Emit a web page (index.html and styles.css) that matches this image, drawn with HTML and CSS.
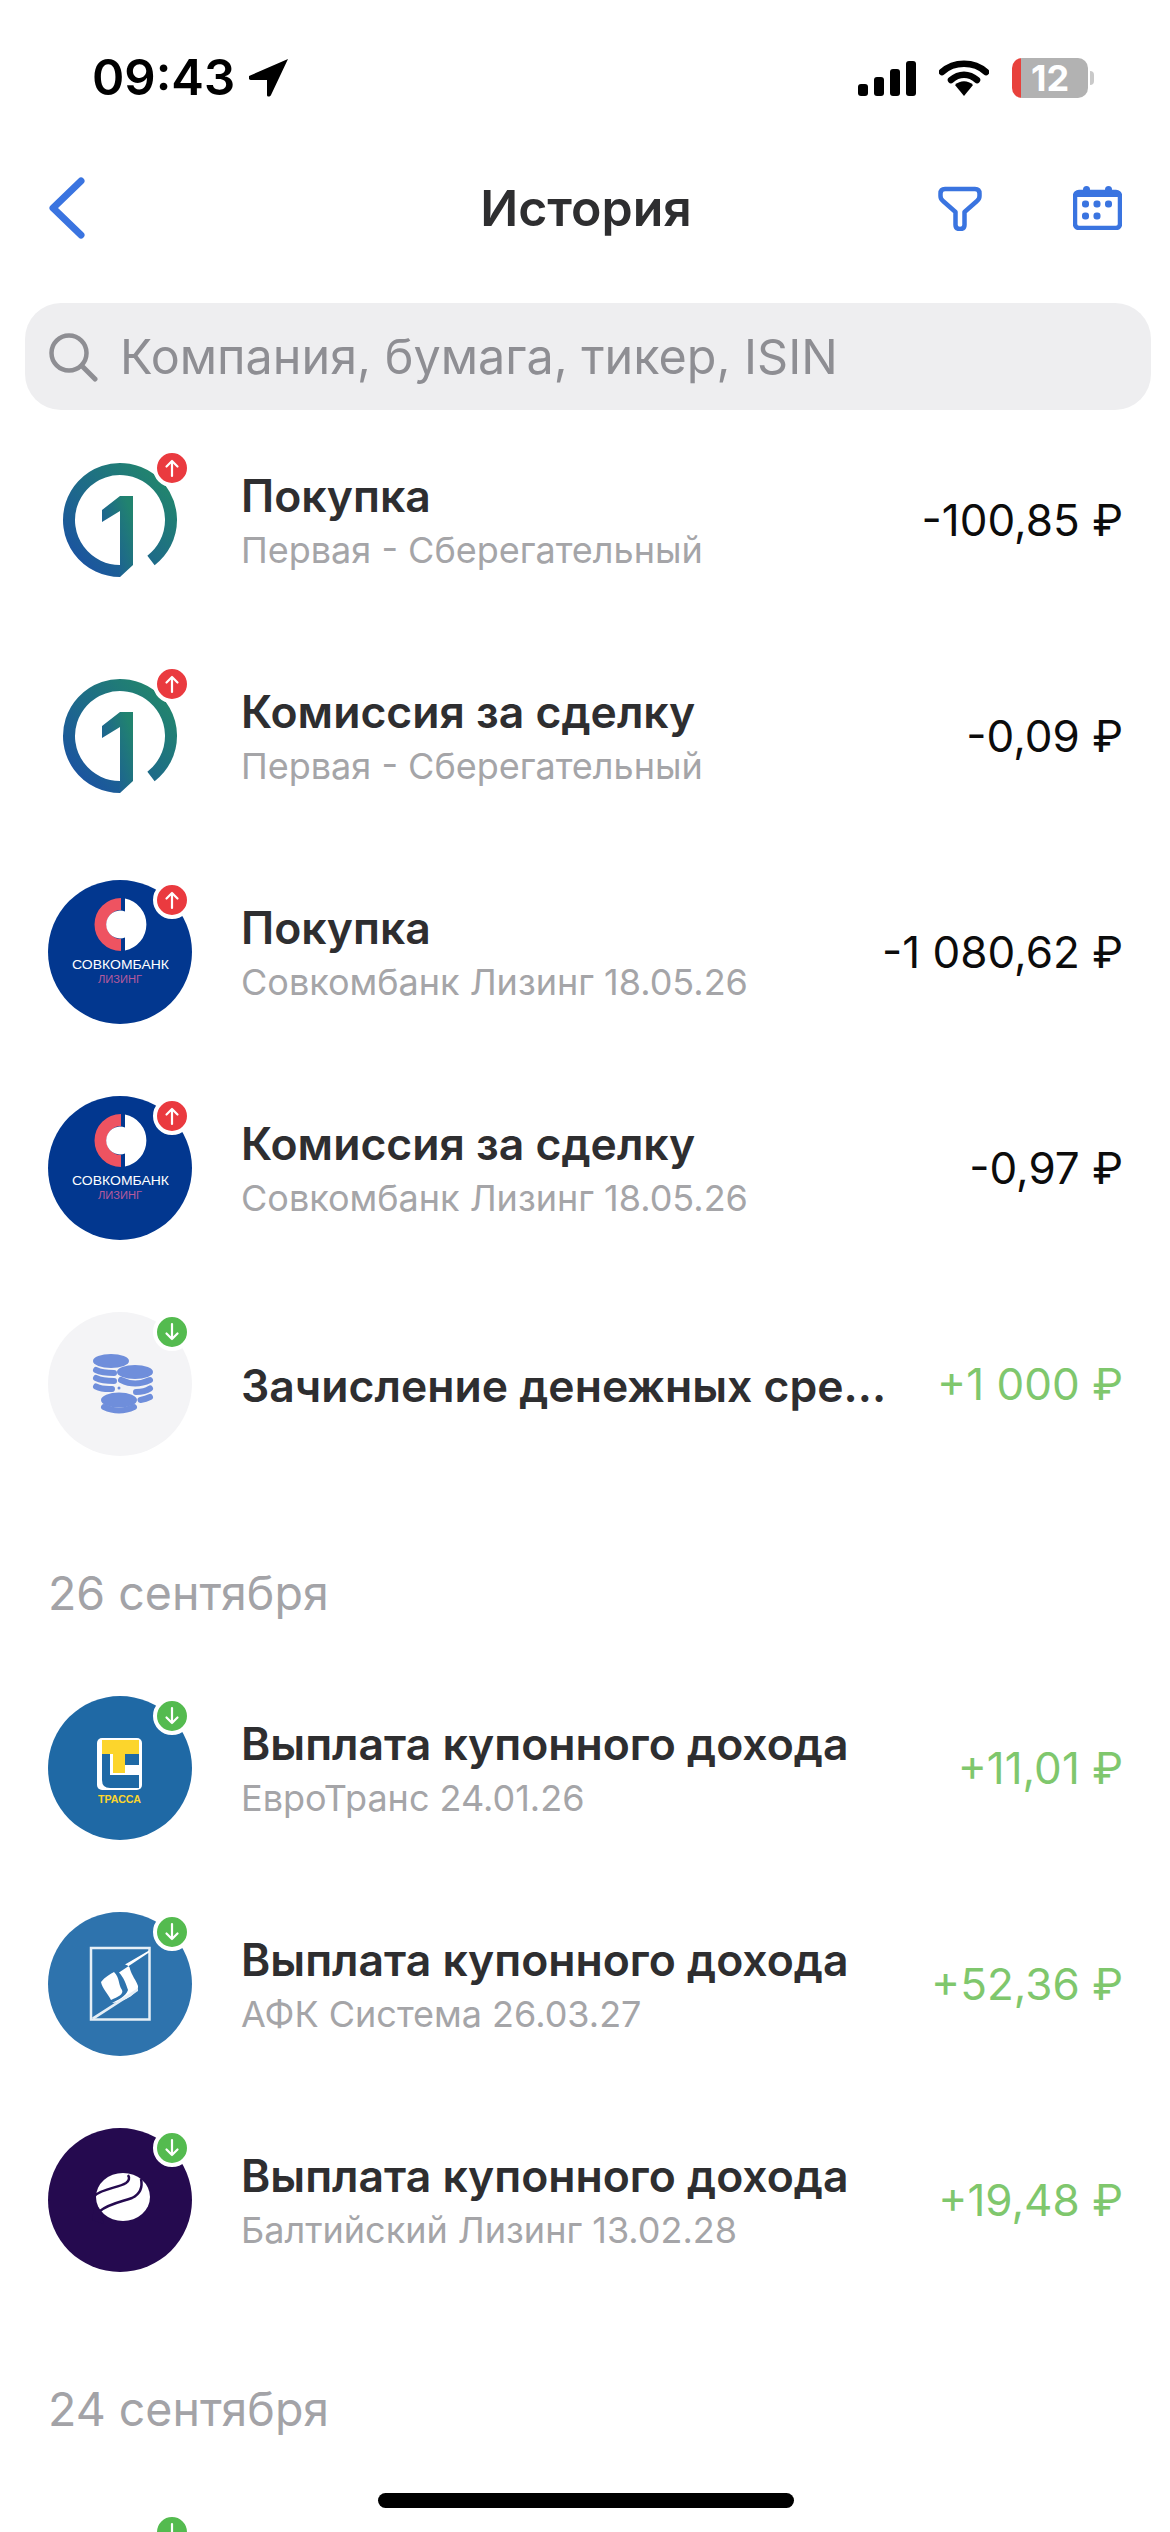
FILE: index.html
```html
<!DOCTYPE html>
<html lang="ru">
<head>
  <meta charset="UTF-8">
  <meta name="viewport" content="width=device-width, initial-scale=1.0">
  <title>История</title>
  <link rel="stylesheet" href="styles.css">
</head>
<body>

<svg class="defs" width="0" height="0" aria-hidden="true">
  <defs>
    <linearGradient id="firstGrad" x1="0.1" y1="0.9" x2="0.9" y2="0.15">
      <stop offset="0" stop-color="#1b559f"/>
      <stop offset="1" stop-color="#21836f"/>
    </linearGradient>

    <symbol id="logo-first" viewBox="0 0 144 144">
      <path d="M72 123 A51 51 0 1 1 103 112.5" fill="none" stroke="url(#firstGrad)" stroke-width="12"/>
      <path d="M85 48 V117 L72 129 V63 L54 74 V62 L72 48 Z" fill="url(#firstGrad)"/>
    </symbol>

    <symbol id="logo-sovcom" viewBox="0 0 144 144">
      <circle cx="72" cy="72" r="72" fill="#02378f"/>
      <path d="M73 18 V30 A14.500 14.500 0 0 0 73 59 V71 A26.500 26.500 0 0 1 73 18 Z" fill="#ee5361"/>
      <path d="M77 18.500 A26.500 26.500 0 0 1 77 70.500 V57.500 A13.900 13.900 0 1 1 77 31.500 Z" fill="#fff"/>
      <text x="72.500" y="88.500" text-anchor="middle" textLength="97" lengthAdjust="spacingAndGlyphs" class="logo-text" fill="#fff">СОВКОМБАНК</text>
      <text x="72" y="103" text-anchor="middle" textLength="44" lengthAdjust="spacingAndGlyphs" class="logo-sub" fill="#b85a9c">ЛИЗИНГ</text>
    </symbol>

    <symbol id="logo-coins" viewBox="0 0 144 144">
      <circle cx="72" cy="72" r="72" fill="#f4f4f6"/>
      <g fill="#6f8edb">
        <ellipse cx="63" cy="49" rx="18" ry="7"/>
        <ellipse cx="87" cy="60" rx="18" ry="7"/>
        <ellipse cx="71" cy="88" rx="18" ry="7.500"/>
        <circle cx="71" cy="76" r="1.500"/>
      </g>
      <g fill="none" stroke="#6f8edb" stroke-width="6" stroke-linecap="round">
        <path d="M48 58 Q54 61 66 61"/>
        <path d="M48 66 Q54 69 66 69"/>
        <path d="M48 74.500 Q54 77.500 64 77"/>
        <path d="M73 68 Q87 75 102 68"/>
        <path d="M88 80 Q97 80 102 76.500"/>
        <path d="M92.500 88 Q98 87 102 85"/>
        <path d="M56 95 Q71 102 86 95"/>
      </g>
    </symbol>

    <symbol id="logo-trassa" viewBox="0 0 144 144">
      <circle cx="72" cy="72" r="72" fill="#1f69a5"/>
      <rect x="49" y="42" width="45" height="52" rx="5" fill="#fff"/>
      <path d="M54 58 H62 V79 H91 V92 H62 Q54 92 54 84 Z" fill="#1f69a5"/>
      <rect x="77" y="58" width="14" height="11" fill="#1f69a5"/>
      <path d="M54 44 H91 V58 H77 V77 H65 V58 H54 Z" fill="#fcd52c"/>
      <text x="71.500" y="107" text-anchor="middle" textLength="43" lengthAdjust="spacingAndGlyphs" class="logo-trassa-text" fill="#fcd52c">ТРАССА</text>
    </symbol>

    <symbol id="logo-sistema" viewBox="0 0 144 144">
      <circle cx="72" cy="72" r="72" fill="#2e73ad"/>
      <rect x="43" y="36" width="58.500" height="71.500" fill="none" stroke="#e6eff6" stroke-width="2.500"/>
      <path d="M101 38.500 L77 52.500 C80 53 82 55 82 57 C84 64 88 68 90 74 C91 80 78 90 64 91 C70 88 78 84 80 78 C78 72 76 66 71 60.500 L101 40.500 Z" fill="#fff"/>
      <path d="M53 70 C57 65 62 62 66 60 C72 66 70 72 74 78 C76 82 70 85 63 88 C60 82 54 76 53 70 Z" fill="#fff"/>
      <path d="M44 105.500 L90 76 L90 79 L46 107.500 Z" fill="#e6eff6"/>
    </symbol>

    <symbol id="logo-baltic" viewBox="0 0 144 144">
      <circle cx="72" cy="72" r="72" fill="#250a4f"/>
      <ellipse cx="75" cy="69" rx="27" ry="24" fill="#fff"/>
      <path d="M46 68 C56 60 70 60 78 55 C81 53 82 50 80 47" fill="none" stroke="#250a4f" stroke-width="2.500"/>
      <path d="M52 83 C60 76 72 74 84 70 C92 66 95 60 93 51" fill="none" stroke="#250a4f" stroke-width="2.500"/>
      <path d="M46 80 L52 83 L56 96 L44 92 Z" fill="#250a4f"/>
    </symbol>

    <symbol id="arrow-up" viewBox="0 0 30 30">
      <path d="M15 23 V8 M9.500 13.500 L15 8 L20.500 13.500" fill="none" stroke="#fff" stroke-width="2.200" stroke-linecap="round" stroke-linejoin="round"/>
    </symbol>
    <symbol id="arrow-down" viewBox="0 0 30 30">
      <path d="M15 7 V22 M9.500 16.500 L15 22 L20.500 16.500" fill="none" stroke="#fff" stroke-width="2.200" stroke-linecap="round" stroke-linejoin="round"/>
    </symbol>
  </defs>
</svg>

<div class="screen">

  <!-- Строка состояния -->
  <div class="status-bar">
    <div class="status-left">
      <span class="time">09:43</span>
      <svg class="location" viewBox="0 0 40 38"><path d="M39 0 L0 17 C-1 19 0 21 2 21 L18 21 L18 36 C18 38 21 38 22 36 Z" fill="#000"/></svg>
    </div>
    <div class="status-right">
      <svg class="signal" viewBox="0 0 58 35">
        <rect x="0" y="23" width="10" height="12" rx="3"/>
        <rect x="16" y="16" width="10" height="19" rx="3"/>
        <rect x="32" y="8" width="10" height="27" rx="3"/>
        <rect x="48" y="0" width="10" height="35" rx="3"/>
      </svg>
      <svg class="wifi" viewBox="0 0 50 36">
        <path d="M3 12 C15 1 35 1 47 12" fill="none" stroke="#000" stroke-width="6.500" stroke-linecap="round"/>
        <path d="M12 20 C20 13 30 13 38 20" fill="none" stroke="#000" stroke-width="6.500" stroke-linecap="round"/>
        <path d="M16 25 C21 20 29 20 34 25 L25 36 Z" fill="#000"/>
      </svg>
      <div class="battery">12</div>
    </div>
  </div>

  <!-- Заголовок -->
  <div class="nav">
    <svg class="back" viewBox="0 0 38 62"><path d="M33 4 L5 31 L33 58" fill="none" stroke="#3a74e0" stroke-width="7" stroke-linecap="round" stroke-linejoin="round"/></svg>
    <h1 class="nav-title">История</h1>
    <div class="nav-actions">
      <svg class="filter" viewBox="0 0 44 45"><path d="M7 3 H37 Q41.500 3 41.500 7.500 V10 Q41.500 13 39 15 L26.500 26 V39 Q26.500 43 22 43 Q17.500 43 17.500 39 V26 L5 15 Q2.500 13 2.500 10 V7.500 Q2.500 3 7 3 Z" fill="none" stroke="#3a74e0" stroke-width="4.500" stroke-linejoin="round"/></svg>
      <svg class="calendar" viewBox="0 0 49 44">
        <rect x="2" y="6" width="45" height="36" rx="4" fill="none" stroke="#3a74e0" stroke-width="4.500"/>
        <rect x="2" y="5" width="45" height="6" rx="2" fill="#3a74e0"/>
        <rect x="10" y="0" width="7" height="8" rx="3.500" fill="#3a74e0"/>
        <rect x="32" y="0" width="7" height="8" rx="3.500" fill="#3a74e0"/>
        <g fill="#3a74e0">
          <rect x="9" y="14.500" width="7" height="7" rx="3"/>
          <rect x="20.500" y="14.500" width="7" height="7" rx="3"/>
          <rect x="32" y="14.500" width="7" height="7" rx="3"/>
          <rect x="9" y="26.500" width="7" height="7" rx="3"/>
          <rect x="20.500" y="26.500" width="7" height="7" rx="3"/>
        </g>
      </svg>
    </div>
  </div>

  <!-- Поиск -->
  <div class="search">
    <svg class="search-icon" viewBox="0 0 50 50"><circle cx="21" cy="21" r="17.500" fill="none" stroke="#8e8e93" stroke-width="4.500"/><path d="M34 34 L47 47" stroke="#8e8e93" stroke-width="5" stroke-linecap="round"/></svg>
    <span class="search-text">Компания, бумага, тикер, ISIN</span>
  </div>

  <!-- Операции -->
  <div class="list">

    <div class="row">
      <div class="avatar">
        <svg class="logo"><use href="#logo-first"/></svg>
        <span class="badge badge-up"><svg><use href="#arrow-up"/></svg></span>
      </div>
      <div class="info">
        <div class="title">Покупка</div>
        <div class="sub">Первая - Сберегательный</div>
      </div>
      <div class="amount">-100,85 ₽</div>
    </div>

    <div class="row">
      <div class="avatar">
        <svg class="logo"><use href="#logo-first"/></svg>
        <span class="badge badge-up"><svg><use href="#arrow-up"/></svg></span>
      </div>
      <div class="info">
        <div class="title">Комиссия за сделку</div>
        <div class="sub">Первая - Сберегательный</div>
      </div>
      <div class="amount">-0,09 ₽</div>
    </div>

    <div class="row">
      <div class="avatar">
        <svg class="logo"><use href="#logo-sovcom"/></svg>
        <span class="badge badge-up"><svg><use href="#arrow-up"/></svg></span>
      </div>
      <div class="info">
        <div class="title">Покупка</div>
        <div class="sub">Совкомбанк Лизинг 18.05.26</div>
      </div>
      <div class="amount">-1 080,62 ₽</div>
    </div>

    <div class="row">
      <div class="avatar">
        <svg class="logo"><use href="#logo-sovcom"/></svg>
        <span class="badge badge-up"><svg><use href="#arrow-up"/></svg></span>
      </div>
      <div class="info">
        <div class="title">Комиссия за сделку</div>
        <div class="sub">Совкомбанк Лизинг 18.05.26</div>
      </div>
      <div class="amount">-0,97 ₽</div>
    </div>

    <div class="row">
      <div class="avatar">
        <svg class="logo"><use href="#logo-coins"/></svg>
        <span class="badge badge-down"><svg><use href="#arrow-down"/></svg></span>
      </div>
      <div class="info">
        <div class="title">Зачисление денежных сре...</div>
      </div>
      <div class="amount income">+1 000 ₽</div>
    </div>

    <div class="date">26 сентября</div>

    <div class="row">
      <div class="avatar">
        <svg class="logo"><use href="#logo-trassa"/></svg>
        <span class="badge badge-down"><svg><use href="#arrow-down"/></svg></span>
      </div>
      <div class="info">
        <div class="title">Выплата купонного дохода</div>
        <div class="sub">ЕвроТранс 24.01.26</div>
      </div>
      <div class="amount income">+11,01 ₽</div>
    </div>

    <div class="row">
      <div class="avatar">
        <svg class="logo"><use href="#logo-sistema"/></svg>
        <span class="badge badge-down"><svg><use href="#arrow-down"/></svg></span>
      </div>
      <div class="info">
        <div class="title">Выплата купонного дохода</div>
        <div class="sub">АФК Система 26.03.27</div>
      </div>
      <div class="amount income">+52,36 ₽</div>
    </div>

    <div class="row">
      <div class="avatar">
        <svg class="logo"><use href="#logo-baltic"/></svg>
        <span class="badge badge-down"><svg><use href="#arrow-down"/></svg></span>
      </div>
      <div class="info">
        <div class="title">Выплата купонного дохода</div>
        <div class="sub">Балтийский Лизинг 13.02.28</div>
      </div>
      <div class="amount income">+19,48 ₽</div>
    </div>

    <div class="date">24 сентября</div>

    <div class="row">
      <div class="avatar">
        <span class="badge badge-down"><svg><use href="#arrow-down"/></svg></span>
      </div>
    </div>
  </div>

  <div class="home-bar"></div>
</div>

</body>
</html>
```

FILE: styles.css
```css
/* Общие стили */
body {
  margin: 0;
  background: #fff;
  font-family: Inter, "Noto Sans", sans-serif;
  color: #2e2e30;
}

.defs {
  position: absolute;
}

.screen {
  position: relative;
  height: 2532px;
  overflow: hidden;
}

/* Строка состояния */
.status-bar {
  display: flex;
  justify-content: space-between;
  align-items: center;
  height: 40px;
  padding: 58px 82px 0 92px;
}

.status-left {
  display: flex;
  align-items: center;
  gap: 14px;
}

.time {
  font-size: 49px;
  font-weight: 600;
  line-height: 40px;
  color: #000;
}

.location {
  width: 40px;
  height: 38px;
}

.status-right {
  display: flex;
  align-items: center;
  gap: 23px;
}

.signal {
  width: 58px;
  height: 35px;
}

.wifi {
  width: 50px;
  height: 36px;
}

.battery {
  position: relative;
  width: 76px;
  height: 40px;
  border-radius: 10px;
  background: linear-gradient(90deg, #e8413c 9px, #b2b2b2 9px);
  color: #fff;
  font-size: 36px;
  font-weight: 700;
  line-height: 40px;
  text-align: center;
}

.battery::after {
  content: "";
  position: absolute;
  top: 13px;
  right: -6px;
  width: 4px;
  height: 14px;
  border-radius: 0 4px 4px 0;
  background: #c9c9c9;
}

/* Заголовок */
.nav {
  position: relative;
  display: flex;
  justify-content: space-between;
  align-items: center;
  height: 80px;
  margin-top: 70px;
  padding: 0 48px;
}

.back {
  width: 38px;
  height: 62px;
}

.nav-title {
  position: absolute;
  left: 2px;
  right: 0;
  margin: 0;
  font-size: 50px;
  font-weight: 600;
  text-align: center;
}

.nav-actions {
  display: flex;
  align-items: center;
  gap: 91px;
}

.filter {
  display: block;
  width: 44px;
  height: 45px;
}

.calendar {
  display: block;
  width: 49px;
  height: 44px;
}

/* Поиск */
.search {
  display: flex;
  align-items: center;
  gap: 22px;
  height: 107px;
  margin: 55px 19px 0 25px;
  padding-left: 23px;
  border-radius: 36px;
  background: #eeeef0;
}

.search-icon {
  width: 50px;
  height: 50px;
}

.search-text {
  font-size: 48.500px;
  color: #8e8e93;
}

/* Список операций */
.list {
  margin-top: 2px;
}

.row {
  display: flex;
  align-items: center;
  height: 216px;
  padding: 0 47px 0 48px;
}

.avatar {
  position: relative;
  flex: none;
  width: 144px;
  height: 144px;
}

.logo {
  display: block;
  width: 144px;
  height: 144px;
}

.badge {
  position: absolute;
  top: 1px;
  right: 1px;
  width: 30px;
  height: 30px;
  border: 4px solid #fff;
  border-radius: 50%;
  box-sizing: content-box;
}

.badge svg {
  display: block;
  width: 30px;
  height: 30px;
}

.badge-up {
  background: #ea3a3f;
}

.badge-down {
  background: #54bb4f;
}

.info {
  flex: 1;
  min-width: 0;
  margin-left: 49px;
  padding-top: 4px;
}

.title {
  font-size: 44.500px;
  font-weight: 600;
  line-height: 54px;
  white-space: nowrap;
}

.sub {
  margin-top: 2px;
  font-size: 36px;
  line-height: 50px;
  color: #a5a5a8;
  white-space: nowrap;
}

.amount {
  flex: none;
  margin-left: 40px;
  font-size: 44px;
  color: #0c0c0c;
  white-space: nowrap;
}

.income {
  color: #7fc76d;
}

.date {
  height: 112px;
  padding-top: 56px;
  padding-left: 48px;
  font-size: 46.500px;
  line-height: 90px;
  color: #a3a3a7;
}

/* Текст внутри логотипов */
.logo-text {
  font-family: "Liberation Sans", sans-serif;
  font-size: 13.500px;
}

.logo-sub {
  font-family: "Liberation Sans", sans-serif;
  font-size: 10px;
}

.logo-trassa-text {
  font-family: "Liberation Sans", sans-serif;
  font-size: 11px;
  font-weight: 700;
}

.home-bar {
  position: absolute;
  left: 378px;
  top: 2493px;
  width: 416px;
  height: 15px;
  border-radius: 8px;
  background: #000;
}
```
